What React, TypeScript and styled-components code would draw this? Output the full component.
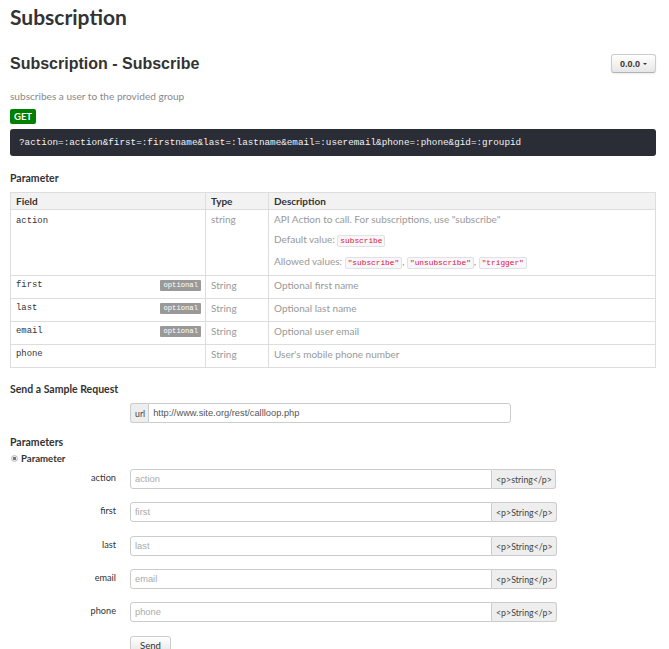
import React from "react";
import styled, { createGlobalStyle } from "styled-components";

const Global = createGlobalStyle`
  html, body { margin: 0; padding: 0; background: #fff; }
  body { font-family: Lato, "Open Sans", sans-serif; color: #333; }
`;

const MONO = `"Liberation Mono", "DejaVu Sans Mono", monospace`;

const Page = styled.div`
  padding: 0 13px 0 10px;
  display: flex;
  flex-direction: column;
`;

const Title = styled.h1`
  margin: 4px 0 0 0;
  font-size: 21px;
  line-height: 26px;
  font-weight: 700;
  color: #333;
`;

const ArticleHead = styled.div`
  display: flex;
  justify-content: space-between;
  align-items: flex-start;
  margin-top: 23px;
`;

const Heading = styled.h2`
  margin: 0;
  font-family: "Liberation Sans", Arial, sans-serif;
  font-size: 16px;
  line-height: 22px;
  font-weight: 700;
  color: #333;
`;

const VersionButton = styled.button`
  margin-top: 1px;
  height: 19px;
  width: 45px;
  padding: 0;
  border: 1px solid #ccc;
  border-bottom-color: #b3b3b3;
  border-radius: 3px;
  background: linear-gradient(#fff, #e6e6e6);
  box-shadow: 0 1px 2px rgba(0,0,0,0.08);
  font-family: "Liberation Sans", Arial, sans-serif;
  font-size: 9px;
  font-weight: 700;
  color: #333;
  display: flex;
  align-items: center;
  justify-content: center;
  gap: 3px;
`;

const Caret = styled.span`
  width: 0;
  height: 0;
  border-left: 2.5px solid transparent;
  border-right: 2.5px solid transparent;
  border-top: 2.5px solid #333;
`;

const Desc = styled.p`
  margin: 14px 0 0 0;
  font-size: 10.1px;
  line-height: 14px;
  color: #888;
`;

const Badge = styled.span`
  align-self: flex-start;
  margin-top: 6px;
  background: #008000;
  color: #fff;
  font-size: 9.5px;
  font-weight: 700;
  line-height: 15px;
  padding: 0 4px;
  border-radius: 2px;
`;

const Code = styled.pre`
  margin: 5px 0 0 0;
  background: #2a2c36;
  color: #f2f2f2;
  border-radius: 3px;
  padding: 0 9px;
  height: 27px;
  display: flex;
  align-items: center;
  font-family: ${MONO};
  font-size: 9.3px;
`;

const SectionTitle = styled.h3<{ $top: number }>`
  margin: ${(p) => p.$top}px 0 0 0;
  font-size: 10.5px;
  line-height: 14px;
  font-weight: 700;
  color: #333;
`;

const Table = styled.table`
  margin-top: 7px;
  width: 100%;
  table-layout: fixed;
  border-collapse: collapse;
  border: 1px solid #ddd;
  font-size: 10px;
`;

const Th = styled.th<{ $w?: number }>`
  ${(p) => (p.$w ? `width: ${p.$w}px;` : "")}
  box-sizing: border-box;
  background: #f2f2f2;
  text-align: left;
  font-weight: 700;
  color: #333;
  border: 1px solid #ddd;
  padding: 0 5px;
  height: 17px;
  font-size: 10px;
`;

const Td = styled.td<{ $dark?: boolean }>`
  border: 1px solid #ddd;
  vertical-align: top;
  padding: 2px 5px 5px;
  color: ${(p) => (p.$dark ? "#333" : "#999")};
  line-height: 14px;
  height: 15px;
`;

const FieldCell = styled.div`
  display: flex;
  justify-content: space-between;
  align-items: center;
`;

const FieldName = styled.span`
  font-family: ${MONO};
  font-size: 8.9px;
  color: #333;
`;

const Optional = styled.span`
  background: #999;
  color: #fff;
  font-family: ${MONO};
  font-size: 7.2px;
  line-height: 11px;
  padding: 0 3px;
  border-radius: 1px;
  margin-right: -1px;
`;

const DescLine = styled.div`
  & + & { margin-top: 6px; }
`;

const InlineCode = styled.code`
  font-family: ${MONO};
  font-size: 7.8px;
  color: #dd1144;
  background: #f7f7f9;
  border: 1px solid #e1e1e8;
  border-radius: 2px;
  padding: 1px 2px;
`;

const FormRow = styled.div<{ $top: number }>`
  display: grid;
  grid-template-columns: 106px auto;
  column-gap: 14px;
  margin-top: ${(p) => p.$top}px;
  align-items: center;
`;

const Label = styled.label`
  text-align: right;
  font-size: 9.2px;
  color: #333;
  margin-top: -3px;
`;

const Group = styled.div`
  display: flex;
  height: 20px;
`;

const Addon = styled.span<{ $side: "left" | "right" }>`
  box-sizing: border-box;
  display: flex;
  align-items: center;
  padding: 0 3px 0 4px;
  background: #eee;
  border: 1px solid #ccc;
  font-size: 8.8px;
  color: #444;
  ${(p) =>
    p.$side === "left"
      ? "border-radius: 3px 0 0 3px; border-right: none;"
      : "border-radius: 0 3px 3px 0; border-left: none;"}
`;

const Input = styled.input<{ $w: number; $round: "left" | "right" }>`
  box-sizing: border-box;
  width: ${(p) => p.$w}px;
  height: 20px;
  border: 1px solid #ccc;
  padding: 0 4px;
  font-family: "Liberation Sans", Arial, sans-serif;
  font-size: 9.3px;
  color: #555;
  outline: none;
  ${(p) =>
    p.$round === "left" ? "border-radius: 3px 0 0 3px;" : "border-radius: 0 3px 3px 0;"}
  &::placeholder { color: #aaa; }
`;

const RadioRow = styled.label`
  display: flex;
  align-items: center;
  gap: 3px;
  margin-top: 4px;
  font-size: 9.6px;
  font-weight: 700;
  color: #333;
`;

const Radio = styled.span`
  width: 5px;
  height: 5px;
  border-radius: 50%;
  border: 1px solid #bbb;
  background: radial-gradient(circle, #777 0 1.5px, #eee 1.6px);
  margin-left: 1px;
`;

const ButtonCell = styled.div`
  display: flex;
`;

const SendButton = styled.button`
  height: 18px;
  width: 41px;
  padding: 0;
  border: 1px solid #ccc;
  border-radius: 3px;
  background: linear-gradient(#fff, #e6e6e6);
  font-family: Lato, sans-serif;
  font-size: 9.6px;
  color: #333;
`;

const params = [
  { name: "first", type: "String", desc: "Optional first name", optional: true },
  { name: "last", type: "String", desc: "Optional last name", optional: true },
  { name: "email", type: "String", desc: "Optional user email", optional: true },
  { name: "phone", type: "String", desc: "User's mobile phone number", optional: false },
];

const formFields = [
  { name: "action", type: "string", top: 5 },
  { name: "first", type: "String", top: 13 },
  { name: "last", type: "String", top: 14 },
  { name: "email", type: "String", top: 13 },
  { name: "phone", type: "String", top: 13 },
];

export default function App() {
  return (
    <Page>
      <Global />
      <Title>Subscription</Title>
      <ArticleHead>
        <Heading>Subscription - Subscribe</Heading>
        <VersionButton>
          0.0.0 <Caret />
        </VersionButton>
      </ArticleHead>
      <Desc>subscribes a user to the provided group</Desc>
      <Badge>GET</Badge>
      <Code>?action=:action&amp;first=:firstname&amp;last=:lastname&amp;email=:useremail&amp;phone=:phone&amp;gid=:groupid</Code>

      <SectionTitle $top={15}>Parameter</SectionTitle>
      <Table>
        <thead>
          <tr>
            <Th $w={195}>Field</Th>
            <Th $w={63}>Type</Th>
            <Th>Description</Th>
          </tr>
        </thead>
        <tbody>
          <tr>
            <Td $dark>
              <FieldName>action</FieldName>
            </Td>
            <Td>string</Td>
            <Td>
              <DescLine>API Action to call. For subscriptions, use "subscribe"</DescLine>
              <DescLine>
                Default value: <InlineCode>subscribe</InlineCode>
              </DescLine>
              <DescLine>
                Allowed values: <InlineCode>"subscribe"</InlineCode>, <InlineCode>"unsubscribe"</InlineCode>,{" "}
                <InlineCode>"trigger"</InlineCode>
              </DescLine>
            </Td>
          </tr>
          {params.map((p) => (
            <tr key={p.name}>
              <Td $dark>
                <FieldCell>
                  <FieldName>{p.name}</FieldName>
                  {p.optional && <Optional>optional</Optional>}
                </FieldCell>
              </Td>
              <Td>{p.type}</Td>
              <Td>{p.desc}</Td>
            </tr>
          ))}
        </tbody>
      </Table>

      <SectionTitle $top={14}>Send a Sample Request</SectionTitle>
      <FormRow $top={7}>
        <span />
        <Group>
          <Addon $side="left">url</Addon>
          <Input $w={363} $round="right" defaultValue="http://www.site.org/rest/callloop.php" />
        </Group>
      </FormRow>

      <SectionTitle $top={12}>Parameters</SectionTitle>
      <RadioRow>
        <Radio />
        Parameter
      </RadioRow>
      {formFields.map((f) => (
        <FormRow key={f.name} $top={f.top}>
          <Label>{f.name}</Label>
          <Group>
            <Input $w={362} $round="left" placeholder={f.name} />
            <Addon $side="right">&lt;p&gt;{f.type}&lt;/p&gt;</Addon>
          </Group>
        </FormRow>
      ))}
      <FormRow $top={14}>
        <span />
        <ButtonCell>
          <SendButton>Send</SendButton>
        </ButtonCell>
      </FormRow>
    </Page>
  );
}
